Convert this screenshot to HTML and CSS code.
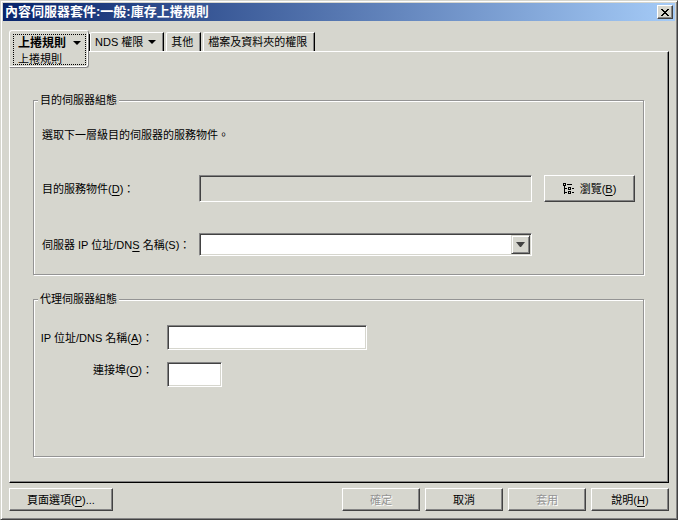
FILE: index.html
```html
<!DOCTYPE html>
<html lang="zh-Hant">
<head>
    <meta charset="UTF-8">
    <meta name="viewport" content="width=device-width, initial-scale=1.0">
    <title>內容伺服器套件:一般:庫存上捲規則</title>
    <link rel="stylesheet" href="styles.css">
</head>
<body>
    <div class="window">
        <header class="titlebar">
            <h1>內容伺服器套件:一般:庫存上捲規則</h1>
            <button type="button" class="close-btn" aria-label="關閉">
                <svg width="8" height="7" viewBox="0 0 8 7" shape-rendering="crispEdges">
                    <path d="M0 0h2v1h1v1h2v-1h1v-1h2v1h-1v1h-1v1h-1v1h1v1h1v1h1v1h-2v-1h-1v-1h-2v1h-1v1h-2v-1h1v-1h1v-1h1v-1h-1v-1h-1v-1h-1z"/>
                </svg>
            </button>
        </header>

        <form class="content">
            <nav class="tabs">
                <div class="tab-active">
                    <div class="tab-focus">
                        <button type="button" class="tab-main">上捲規則
                            <svg width="8" height="4" viewBox="0 0 8 4"><path d="M0 0h8L4 4z"/></svg>
                        </button>
                        <a href="#rules">上捲規則</a>
                    </div>
                </div>
                <button type="button" class="tab">NDS 權限
                    <svg width="8" height="4" viewBox="0 0 8 4"><path d="M0 0h8L4 4z"/></svg>
                </button>
                <button type="button" class="tab">其他</button>
                <button type="button" class="tab">檔案及資料夾的權限</button>
            </nav>

            <main class="panel" id="rules">
                <fieldset class="target">
                    <legend>目的伺服器組態</legend>
                    <p>選取下一層級目的伺服器的服務物件。</p>
                    <div class="target-grid">
                        <label for="object">目的服務物件(<u>D</u>)：</label>
                        <input type="text" id="object" class="field" disabled>
                        <button type="button" class="btn browse-btn">
                            <svg width="12" height="12" viewBox="0 0 12 12" shape-rendering="crispEdges">
                                <path d="M0 0h3v3h-3zM1 1v1h1v-1zM4 1h5v1h-5zM1 3h1v8h-1zM2 5h2v1h-2zM2 9h2v1h-2zM5 4h3v3h-3zM6 5v1h1v-1zM9 5h2v1h-2zM5 8h3v3h-3zM6 9v1h1v-1zM9 9h2v1h-2z" fill-rule="evenodd"/>
                            </svg>
                            <span>瀏覽(<u>B</u>)</span>
                        </button>
                        <label for="server">伺服器 IP 位址/DN<u>S</u> 名稱(S)：</label>
                        <div class="combo">
                            <select id="server" class="field"><option></option></select>
                            <span class="combo-arrow">
                                <svg width="9" height="5" viewBox="0 0 9 5"><path d="M0 0h9L5 5H4z"/></svg>
                            </span>
                        </div>
                    </div>
                </fieldset>

                <fieldset class="proxy">
                    <legend>代理伺服器組態</legend>
                    <div class="proxy-grid">
                        <label for="address">IP 位址/DNS 名稱(<u>A</u>)：</label>
                        <input type="text" id="address" class="field address">
                        <label for="port" class="port-label">連接埠(<u>O</u>)：</label>
                        <input type="text" id="port" class="field port">
                    </div>
                </fieldset>
            </main>

            <footer class="actions">
                <button type="button" class="btn options-btn">頁面選項(<u>P</u>)...</button>
                <button type="submit" class="btn" disabled>確定</button>
                <button type="button" class="btn">取消</button>
                <button type="button" class="btn" disabled>套用</button>
                <button type="button" class="btn">說明(<u>H</u>)</button>
            </footer>
        </form>
    </div>
</body>
</html>
```

FILE: styles.css
```css
:root {
    --face: #d6d6ce;
    --light: #ffffff;
    --shadow: #848484;
    --dark: #424242;
}
* {
    box-sizing: border-box;
}
body {
    margin: 0;
    font-family: "Liberation Sans", "Noto Sans CJK TC", sans-serif;
    font-size: 11px;
    line-height: 16px;
    color: black;
    background-color: var(--face);
}
button, input, select {
    font: inherit;
    color: inherit;
    margin: 0;
    padding: 0;
    border-radius: 0;
}
svg {
    display: block;
    flex: none;
}
u {
    text-underline-offset: 2px;
}

/* Window frame and title */
.window {
    display: flex;
    flex-direction: column;
    min-height: 100vh;
    padding: 1px;
    border: 1px solid;
    border-color: var(--face) var(--dark) var(--dark) var(--face);
    box-shadow: inset 1px 1px var(--light), inset -1px -1px var(--shadow);
}
.titlebar {
    display: flex;
    align-items: center;
    justify-content: space-between;
    height: 18px;
    margin: 1px 1px 0;
    padding: 0 2px;
    color: white;
    background: linear-gradient(to right, #08246b, #a5cbf7);
}
.titlebar h1 {
    margin: 0;
    font-size: 13px;
    line-height: 18px;
}
.close-btn {
    display: flex;
    align-items: center;
    justify-content: center;
    width: 16px;
    height: 14px;
    color: black;
    background-color: var(--face);
    border: 1px solid;
    border-color: var(--light) var(--dark) var(--dark) var(--light);
    box-shadow: inset -1px -1px var(--shadow);
}
.content {
    flex: 1;
    display: flex;
    flex-direction: column;
    padding: 9px 7px 7px;
}

/* Tabs */
.tabs {
    display: flex;
    align-items: flex-end;
    height: 21px;
}
.tab {
    display: flex;
    align-items: center;
    gap: 5px;
    height: 19px;
    padding: 0 7px 0 4px;
    background-color: var(--face);
    border: 1px solid;
    border-color: var(--light) black var(--light) var(--light);
    border-bottom: none;
    border-top-left-radius: 2px;
    box-shadow: inset -1px 0 var(--shadow);
    margin-right: 2px;
}
.tab-active {
    position: relative;
    align-self: flex-start;
    width: 80px;
    height: 38px;
    margin-right: 1px;
    padding: 3px 2px 2px 3px;
    background-color: var(--face);
    border: 1px solid;
    border-color: var(--light) var(--shadow) var(--shadow) var(--light);
    border-radius: 3px;
    border-bottom-left-radius: 0;
    box-shadow: inset -1px -1px var(--light);
}
.tab-active::after {
    content: "";
    position: absolute;
    top: 3px;
    right: -2px;
    width: 1px;
    height: 17px;
    background-color: black;
}
.tab-focus {
    height: 31px;
    padding: 0 4px;
    border: 1px dotted black;
}
.tab-main {
    display: flex;
    align-items: center;
    gap: 7px;
    background: none;
    border: none;
    font-size: 12px;
    font-weight: bold;
    white-space: nowrap;
}
.tab-focus a {
    display: block;
    color: black;
    text-decoration: none;
}

/* Page */
.panel {
    flex: 1;
    display: flex;
    flex-direction: column;
    gap: 16px;
    padding: 40px 24px 25px 23px;
    border: 1px solid;
    border-color: var(--light) black black var(--light);
    box-shadow: inset -1px -1px var(--shadow);
}
fieldset {
    min-width: 0;
    margin: 0;
    padding: 0 8px;
    border: 1px solid #949494;
    box-shadow: inset 1px 1px var(--light), 1px 1px var(--light);
}
legend {
    margin-left: -4px;
    padding: 0 2px;
    background-color: var(--face);
}
.target {
    padding-bottom: 18px;
}
.target p {
    margin: 19px 0 32px;
}
.target-grid {
    display: grid;
    grid-template-columns: 145px 1fr 91px;
    column-gap: 12px;
    row-gap: 31px;
    align-items: center;
}
.target-grid label {
    margin-right: -12px;
}
.target-grid .field {
    width: 100%;
}
.target-grid > label, .proxy-grid > label {
    white-space: nowrap;
}
.field {
    display: block;
    height: 25px;
    padding: 0 3px;
    background-color: white;
    border: 1px solid;
    border-color: var(--shadow) var(--light) var(--light) var(--shadow);
    box-shadow: inset 1px 1px var(--dark), inset -1px -1px var(--face);
}
.field:disabled {
    height: 27px;
    background-color: var(--face);
}
.combo {
    position: relative;
}
.combo .field {
    height: 23px;
    appearance: none;
}
.combo-arrow {
    position: absolute;
    top: 2px;
    right: 2px;
    bottom: 2px;
    display: flex;
    align-items: center;
    justify-content: center;
    width: 19px;
    background-color: var(--face);
    fill: var(--dark);
    border: 1px solid;
    border-color: var(--face) var(--dark) var(--dark) var(--face);
    box-shadow: inset 1px 1px var(--light), inset -1px -1px var(--shadow);
    pointer-events: none;
}
.proxy {
    flex: 1;
}
.proxy-grid {
    display: grid;
    grid-template-columns: 111px 1fr;
    column-gap: 14px;
    row-gap: 12px;
    align-items: center;
    margin-top: 18px;
}
.proxy-grid label {
    justify-self: end;
}
.proxy-grid .port-label {
    align-self: start;
}
.address {
    width: 200px;
}
.port {
    width: 55px;
}

/* Buttons */
.btn {
    width: 78px;
    height: 23px;
    background-color: var(--face);
    border: 1px solid;
    border-color: var(--light) var(--dark) var(--dark) var(--light);
    box-shadow: inset -1px -1px var(--shadow);
}
.btn:disabled {
    color: #949494;
    text-shadow: 1px 1px var(--light);
}
.browse-btn {
    display: flex;
    align-items: center;
    justify-content: center;
    gap: 5px;
    width: 91px;
    height: 27px;
}
.actions {
    display: flex;
    gap: 5px;
    margin-top: 5px;
}
.options-btn {
    width: 104px;
    margin-right: auto;
}
```
